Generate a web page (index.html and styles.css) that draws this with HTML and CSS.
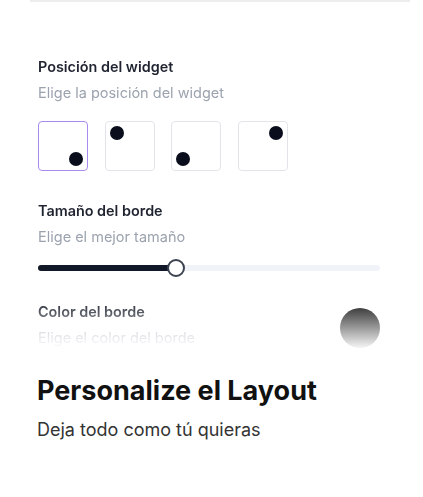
FILE: index.html
```html
<!DOCTYPE html>
<html lang="es">
<head>
  <meta charset="UTF-8" />
  <meta name="viewport" content="width=device-width, initial-scale=1.0" />
  <title>Personalize el Layout</title>
  <link rel="stylesheet" href="styles.css">
</head>
<body>
  <!-- Vista previa del panel de ajustes -->
  <section class="panel">
    <div class="field">
      <h3>Posición del widget</h3>
      <p>Elige la posición del widget</p>
      <div class="positions">
        <div class="pos bottom-right active"><span class="dot"></span></div>
        <div class="pos top-left"><span class="dot"></span></div>
        <div class="pos bottom-left"><span class="dot"></span></div>
        <div class="pos top-right"><span class="dot"></span></div>
      </div>
    </div>

    <div class="field">
      <h3>Tamaño del borde</h3>
      <p>Elige el mejor tamaño</p>
      <div class="slider">
        <div class="fill" style="width: 40%"></div>
        <div class="thumb"></div>
        <div class="rest"></div>
      </div>
    </div>

    <div class="field color-row">
      <div>
        <h3>Color del borde</h3>
        <p>Elige el color del borde</p>
      </div>
      <div class="swatch"></div>
    </div>
  </section>

  <div class="intro">
    <h1>Personalize el Layout</h1>
    <p>Deja todo como tú quieras</p>
  </div>
</body>
</html>
```

FILE: styles.css
```css
body {
  margin: 0;
  font-family: 'Inter', 'Noto Sans', sans-serif;
  background-color: #fff;
  color: #111;
}
.panel {
  margin-left: 30px;
  width: 380px;
  border-top: 2px solid #ededed;
  padding: 55px 30px 8px 8px;
  box-sizing: border-box;
  -webkit-mask-image: linear-gradient(to bottom, #000 300px, transparent 350px);
  mask-image: linear-gradient(to bottom, #000 300px, transparent 350px);
}
.field h3 {
  margin: 0;
  font-size: 14.4px;
  line-height: 20px;
  font-weight: 600;
  color: #1f2430;
}
.field p {
  margin: 6px 0 0;
  font-size: 14.5px;
  line-height: 20px;
  color: #9ca3af;
}
.field + .field {
  margin-top: 30px;
}
.positions {
  display: flex;
  gap: 16.5px;
  margin-top: 18px;
}
.pos {
  width: 50px;
  height: 50px;
  box-sizing: border-box;
  border: 1.5px solid #e3e4ea;
  border-radius: 4px;
  padding: 4px;
  display: flex;
}
.pos.active {
  border-color: #a98bf0;
}
.dot {
  width: 14px;
  height: 14px;
  border-radius: 50%;
  background-color: #0a0e1c;
}
.top-left { align-items: flex-start; justify-content: flex-start; }
.top-right { align-items: flex-start; justify-content: flex-end; }
.bottom-left { align-items: flex-end; justify-content: flex-start; }
.bottom-right { align-items: flex-end; justify-content: flex-end; }
.slider {
  display: flex;
  align-items: center;
  margin-top: 12px;
  height: 18px;
}
.fill {
  height: 6px;
  background-color: #111827;
  border-radius: 3px 0 0 3px;
  margin-right: -8px;
}
.thumb {
  width: 18px;
  height: 18px;
  box-sizing: border-box;
  border: 2px solid #3b4250;
  border-radius: 50%;
  background-color: #fff;
  position: relative;
  z-index: 1;
  flex-shrink: 0;
}
.rest {
  flex: 1;
  height: 6px;
  background-color: #f0f3f8;
  border-radius: 0 3px 3px 0;
  margin-left: -9px;
}
.color-row {
  display: flex;
  justify-content: space-between;
  align-items: flex-start;
}
.field.color-row {
  margin-top: 25px;
}
.swatch {
  width: 40px;
  height: 40px;
  border-radius: 50%;
  background-color: #1a1a1a;
  margin-top: 6px;
}
.intro {
  padding: 20px 37px;
}
.intro h1 {
  margin: 0;
  font-size: 27px;
  line-height: 30px;
  font-weight: 700;
  color: #111;
}
.intro p {
  margin: 13px 0 0;
  font-size: 18px;
  line-height: 22px;
  color: #333;
}
```
